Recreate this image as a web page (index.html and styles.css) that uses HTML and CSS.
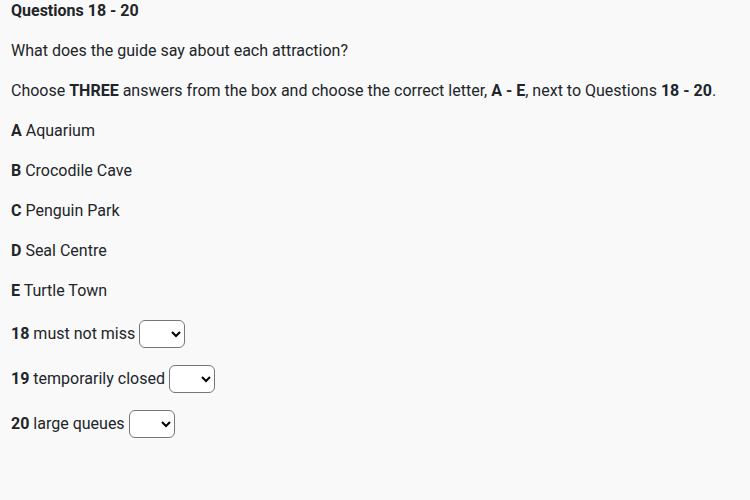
FILE: index.html
```html
<!DOCTYPE html>
<html>
<head>
<meta charset="utf-8">
<link rel="stylesheet" href="styles.css">
</head>
<body>
<div class="page">
  <h5 class="title">Questions 18 - 20</h5>
  <p class="line">What does the guide say about each attraction?</p>
  <p class="line">Choose <b>THREE</b> answers from the box and choose the correct letter, <b>A - E</b>, next to Questions <b>18 - 20</b>.</p>
  <p class="line"><b>A</b> Aquarium</p>
  <p class="line"><b>B</b> Crocodile Cave</p>
  <p class="line"><b>C</b> Penguin Park</p>
  <p class="line"><b>D</b> Seal Centre</p>
  <p class="line"><b>E</b> Turtle Town</p>
  <p class="line q"><b>18</b> must not miss <select class="pick"><option></option><option>A</option><option>B</option><option>C</option><option>D</option><option>E</option></select></p>
  <p class="line q"><b>19</b> temporarily closed <select class="pick"><option></option><option>A</option><option>B</option><option>C</option><option>D</option><option>E</option></select></p>
  <p class="line q"><b>20</b> large queues <select class="pick"><option></option><option>A</option><option>B</option><option>C</option><option>D</option><option>E</option></select></p>
</div>
</body>
</html>
```
FILE: styles.css
```css
html, body {
  margin: 0;
  padding: 0;
  background: #f9f9f9;
}
body {
  font-family: Roboto, "Liberation Sans", sans-serif;
  font-size: 16px;
  color: #212529;
}
.page {
  padding: 1px 11px 0;
}
.title {
  font-size: 16px;
  font-weight: 700;
  line-height: 20px;
  margin: 0 0 18px;
}
.line {
  line-height: 24px;
  margin: 0 0 16px;
}
.line b {
  font-weight: 700;
}
.q {
  display: flex;
  align-items: center;
  height: 29px;
}
.q b {
  margin-right: 4px;
}
.pick {
  margin-left: 4px;
  width: 46px;
  height: 28px;
  border: 1px solid #767676;
  border-radius: 6px;
  background: #fff;
  font-family: Roboto, "Liberation Sans", sans-serif;
  font-size: 16px;
}
```
